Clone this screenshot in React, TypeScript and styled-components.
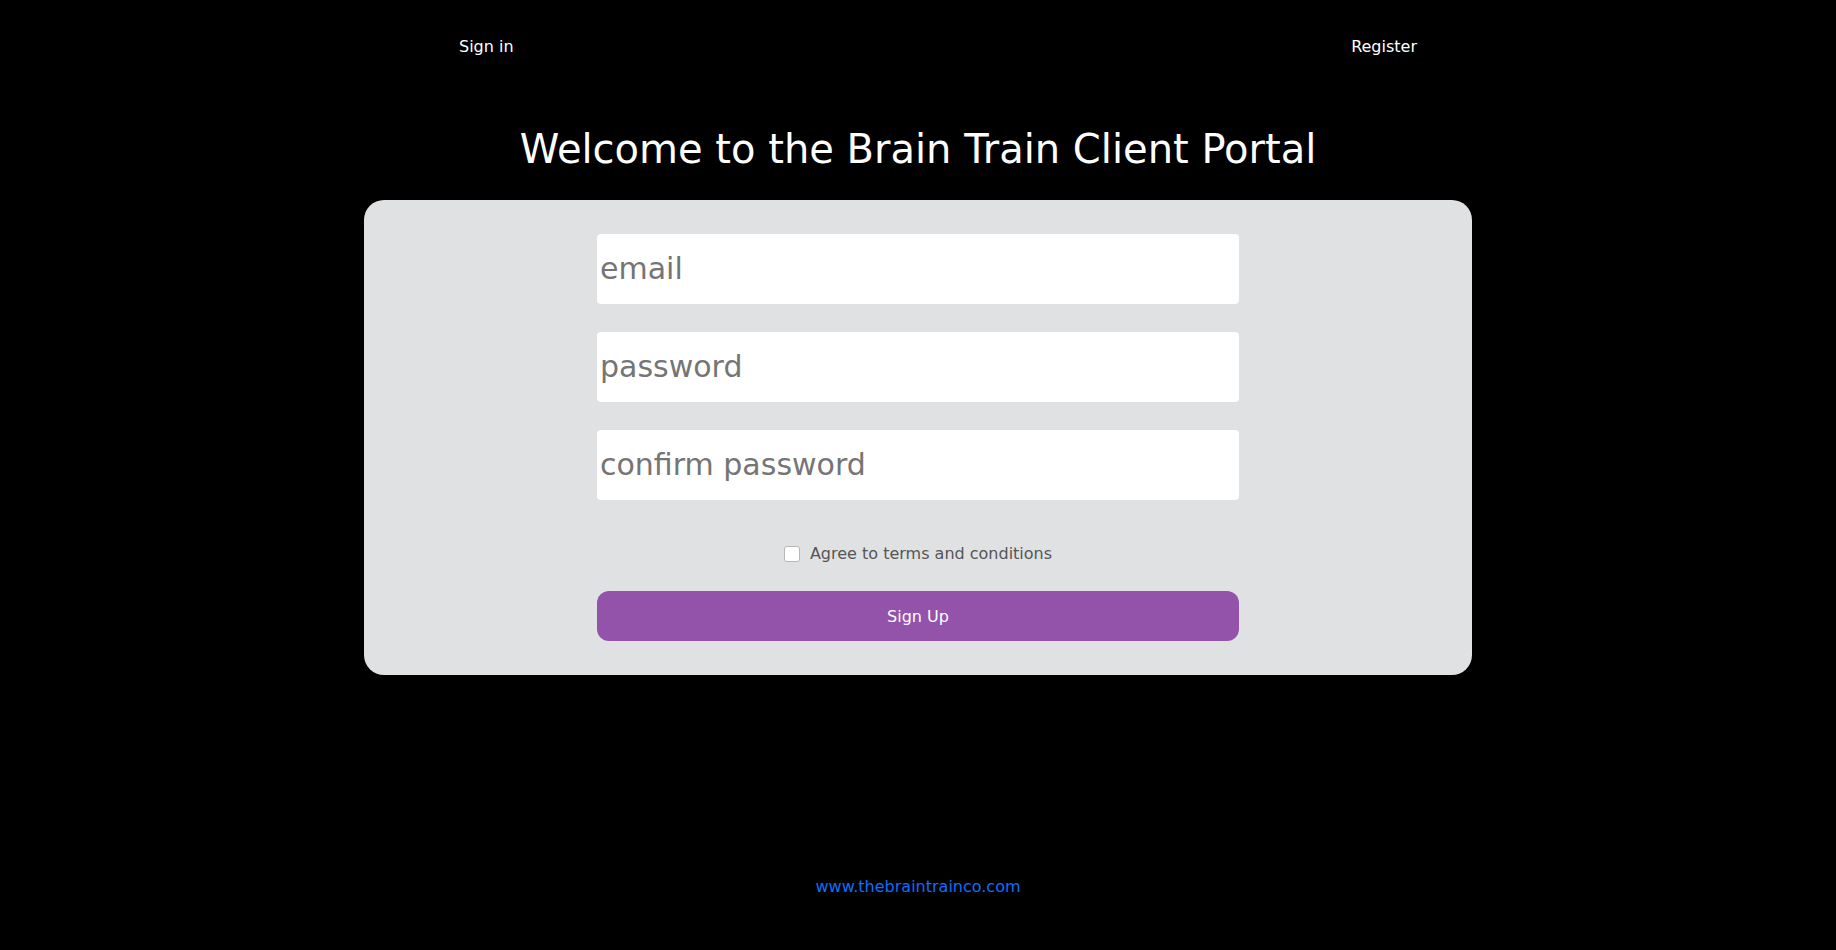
import React, { FC } from 'react';
import styled, { createGlobalStyle } from 'styled-components';

const GlobalStyle = createGlobalStyle`
  html, body {
    margin: 0;
    padding: 0;
    background: #000;
  }

  body {
    font-family: 'DejaVu Sans', 'Noto Sans', sans-serif;
    font-size: 16px;
    line-height: 1.5;
    color: #fff;
  }

  * {
    box-sizing: border-box;
  }
`;

const Page = styled.div`
  min-height: 950px;
  display: flex;
  flex-direction: column;
`;

const Nav = styled.nav`
  display: flex;
  justify-content: space-between;
  padding: 35px 419px 0 459px;
`;

const NavLink = styled.a`
  color: #fff;
  text-decoration: none;
  font-size: 16px;
  line-height: 24px;
  cursor: pointer;
`;

const Title = styled.h1`
  margin: 66px 0 27px;
  font-size: 40px;
  font-weight: 400;
  line-height: 48px;
  text-align: center;
  color: #fff;
`;

const Card = styled.div`
  width: 1108px;
  margin: 0 auto;
  padding: 34px 0 34px;
  background: #e0e1e3;
  border-radius: 20px;
`;

const Form = styled.form`
  width: 642px;
  margin: 0 auto;
  display: flex;
  flex-direction: column;
  align-items: stretch;
`;

const Field = styled.input`
  height: 70px;
  padding: 0 3px 1px;
  border: none;
  border-radius: 4px;
  background: #fff;
  font-family: inherit;
  font-size: 30px;
  color: #333;
  outline: none;

  & + & {
    margin-top: 28px;
  }

  &::placeholder {
    color: #757575;
  }
`;

const CheckRow = styled.label`
  display: flex;
  align-items: center;
  justify-content: center;
  gap: 10px;
  margin-top: 42px;
  height: 24px;
  font-size: 16px;
  color: #555;
  cursor: pointer;
`;

const CheckBox = styled.input`
  appearance: none;
  width: 16px;
  height: 16px;
  margin: 0;
  background: #fff;
  border: 1px solid #b9b6b2;
  border-radius: 3px;

  &:checked {
    background: #9353aa;
    border-color: #9353aa;
  }
`;

const SubmitButton = styled.button`
  margin-top: 25px;
  height: 50px;
  border: none;
  border-radius: 12px;
  background: #9353aa;
  color: #fff;
  font-family: inherit;
  font-size: 16px;
  cursor: pointer;
`;

const Footer = styled.footer`
  margin-top: 200px;
  text-align: center;
`;

const FooterLink = styled.a`
  color: #0d6efd;
  font-size: 16px;
  line-height: 24px;
  text-decoration: none;
`;

const App: FC = () => (
  <Page>
    <GlobalStyle />
    <Nav>
      <NavLink>Sign in</NavLink>
      <NavLink>Register</NavLink>
    </Nav>
    <Title>Welcome to the Brain Train Client Portal</Title>
    <Card>
      <Form onSubmit={e => e.preventDefault()}>
        <Field type="email" placeholder="email" />
        <Field type="password" placeholder="password" />
        <Field type="password" placeholder="confirm password" />
        <CheckRow>
          <CheckBox type="checkbox" />
          Agree to terms and conditions
        </CheckRow>
        <SubmitButton type="submit">Sign Up</SubmitButton>
      </Form>
    </Card>
    <Footer>
      <FooterLink href="#">www.thebraintrainco.com</FooterLink>
    </Footer>
  </Page>
);

export default App;
